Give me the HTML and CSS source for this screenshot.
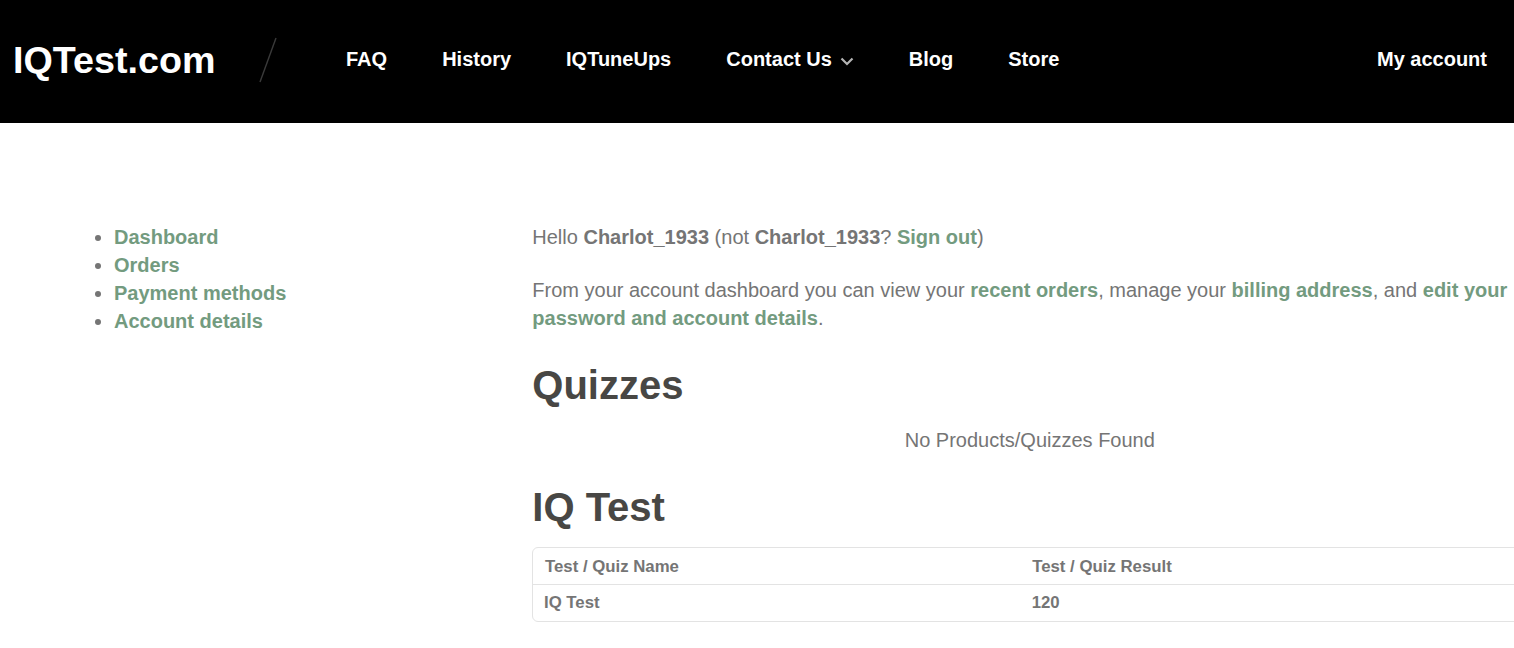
FILE: index.html
```html
<!DOCTYPE html>
<html lang="en">
<head>
<meta charset="utf-8">
<title>My account</title>
<link rel="stylesheet" href="styles.css">
</head>
<body>
<header class="site-header">
  <a class="logo" href="#">IQTest.com</a>
  <svg class="slash" width="18" height="46" viewBox="0 0 18 46"><path d="M17 1 L1 45" stroke="#3a3a3a" stroke-width="1.4" fill="none"/></svg>
  <nav class="main-nav">
    <a href="#">FAQ</a>
    <a href="#">History</a>
    <a href="#">IQTuneUps</a>
    <a href="#" class="has-sub">Contact Us
      <svg class="chev" width="14" height="9" viewBox="0 0 14 9"><path d="M1.5 1.5 L7 7 L12.5 1.5" stroke="#b4b4b4" stroke-width="2.2" fill="none"/></svg>
    </a>
    <a href="#">Blog</a>
    <a href="#">Store</a>
  </nav>
  <a class="account-link" href="#">My account</a>
</header>
<main class="account">
  <ul class="side-menu">
    <li><a href="#">Dashboard</a></li>
    <li><a href="#">Orders</a></li>
    <li><a href="#">Payment methods</a></li>
    <li><a href="#">Account details</a></li>
  </ul>
  <section class="content">
    <p class="hello">Hello <strong>Charlot_1933</strong> (not <strong>Charlot_1933</strong>? <a href="#">Sign out</a>)</p>
    <p class="intro">From your account dashboard you can view your <a href="#">recent orders</a>, manage your <a href="#">billing address</a>, and <a href="#">edit your password and account details</a>.</p>
    <h2 class="quizzes">Quizzes</h2>
    <p class="empty">No Products/Quizzes Found</p>
    <h2 class="iq">IQ Test</h2>
    <div class="results">
      <div class="row head"><span>Test / Quiz Name</span><span>Test / Quiz Result</span></div>
      <div class="row"><span>IQ Test</span><span>120</span></div>
    </div>
  </section>
</main>
</body>
</html>
```
FILE: styles.css
```css
* { box-sizing: border-box; }
html, body { margin: 0; padding: 0; overflow: hidden; }
body {
  width: 1514px;
  height: 648px;
  background: #fff;
  color: #757575;
  font-family: "Liberation Sans", Arial, sans-serif;
  font-size: 20px;
  line-height: 28px;
}
a { text-decoration: none; }
.site-header {
  height: 123px;
  background: #000;
  display: flex;
  align-items: center;
  padding: 0 27px 6px 13px;
}
.logo {
  color: #fff;
  font-weight: 700;
  font-size: 37.7px;
  line-height: 40px;
  width: 246px;
  margin-top: 2px;
}
.slash { flex: none; margin-top: 2px; }
.main-nav {
  display: flex;
  gap: 55px;
  margin-left: 69px;
  flex: 1;
}
.main-nav a, .account-link {
  color: #fff;
  font-weight: 700;
  font-size: 20px;
  line-height: 28px;
  white-space: nowrap;
}
.chev { margin-left: 2.4px; vertical-align: 0; }
.account {
  display: flex;
  padding-top: 100px;
}
.side-menu {
  list-style: disc;
  margin: 0;
  padding: 0 0 0 114px;
  width: 532.3px;
  flex: none;
}
.side-menu a, .content a {
  color: #739b7f;
  font-weight: 700;
}
.content {
  flex: none;
  width: 995px;
}
.content p { margin: 0; }
.content strong { font-weight: 700; }
.content .intro { margin-top: 25px; }
h2 {
  margin: 0;
  color: #484744;
  font-size: 40px;
  line-height: 48px;
  font-weight: 700;
}
.quizzes { margin-top: 29px; }
.content .empty { text-align: center; margin-top: 17px; }
.iq { margin-top: 29px; }
.results {
  margin-top: 16px;
  width: 1000px;
  border: 1px solid #e3e3e3;
  border-radius: 6px;
  font-size: 16.8px;
  font-weight: 700;
  line-height: 20px;
}
.row {
  display: grid;
  grid-template-columns: 487.7px 1fr;
  padding: 8px 12px 8px 10.7px;
}
.row.head {
  grid-template-columns: 487.2px 1fr;
  padding: 9px 12px 7px 11.7px;
  border-bottom: 1px solid #e3e3e3;
}
```
